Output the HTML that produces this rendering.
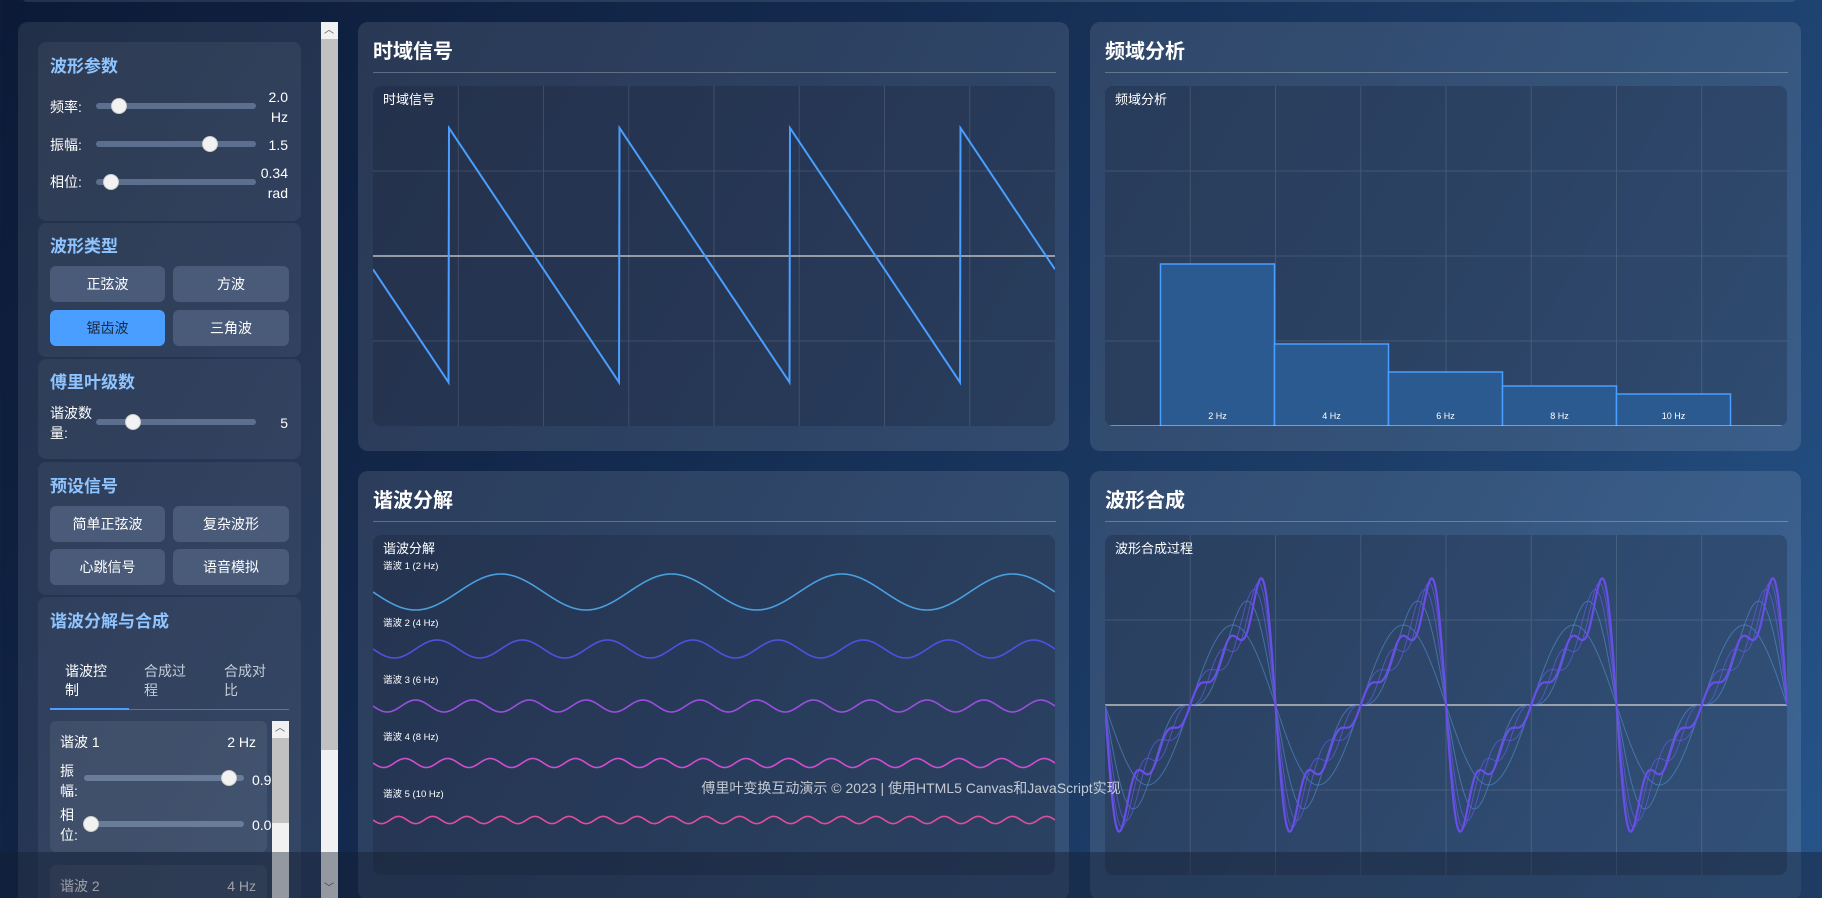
<!DOCTYPE html>
<html><head><meta charset="utf-8">
<style>
*{box-sizing:border-box;margin:0;padding:0}
html,body{width:1822px;height:898px;overflow:hidden}
body{position:relative;font-family:"Liberation Sans","Noto Sans CJK SC",sans-serif;color:#fff;
background:linear-gradient(120deg,#0c1a36 0%,#13294d 35%,#1c3d68 70%,#26548a 100%)}
.abs{position:absolute}
.topbar{left:22px;top:-8px;width:1774px;height:10px;border-radius:6px;background:rgba(255,255,255,0.1)}
.side{left:18px;top:22px;width:320px;height:900px;border-radius:10px;background:rgba(255,255,255,0.09);overflow:hidden}
.sb{left:321px;top:22px;width:17px;height:876px;background:#f1f1f1}
.sbt{left:321px;top:39px;width:17px;height:711px;background:#c1c1c1}
.sec{left:38px;width:263px;border-radius:8px;background:rgba(255,255,255,0.06)}
.st{left:50px;font-size:17px;font-weight:bold;color:#8ec4ff;line-height:20px}
.lb{font-size:14px;line-height:20px;color:#fff}
.trk{height:6px;border-radius:3px;background:#5c6f8e}
.th{width:16px;height:16px;border-radius:50%;background:#f2f2f2;border:1px solid #ccc}
.val{font-size:14px;line-height:20px;text-align:right;color:#fff}
.btn{height:36px;border-radius:6px;background:#4a5b79;font-size:14px;line-height:36px;text-align:center;color:#fff}
.btn.on{background:#4a9eff;color:#1a2a44}
.panel{border-radius:10px;background:rgba(255,255,255,0.11);width:711px;height:429px}
.pt{left:15px;top:16px;font-size:20px;font-weight:bold;line-height:28px}
.pd{left:15px;right:13px;top:50px;height:1px;background:rgba(255,255,255,0.25)}
.ch{left:15px;top:64px;width:682px;height:340px;border-radius:8px;background:rgba(20,30,50,0.28);overflow:hidden}
.cl{left:10px;top:5px;font-size:13px;line-height:18px}
svg{position:absolute;left:0;top:0}
</style></head><body>
<div class="abs topbar"></div>

<div class="abs side"></div>
<div class="abs sb"></div><div class="abs sbt"></div>
<div class="abs" style="left:324px;top:26px;font-size:10px;color:#555;line-height:10px">︿</div>
<div class="abs" style="left:324px;top:884px;font-size:10px;color:#555;line-height:10px">﹀</div>

<div class="abs sec" style="top:42px;height:179px"></div>
<div class="abs st" style="top:57px">波形参数</div>
<div class="abs lb" style="left:50px;top:97px">频率:</div>
<div class="abs trk" style="left:96px;top:103px;width:160px"></div>
<div class="abs th" style="left:111px;top:98px"></div>
<div class="abs val" style="left:250px;top:87px;width:38px">2.0<br>Hz</div>
<div class="abs lb" style="left:50px;top:135px">振幅:</div>
<div class="abs trk" style="left:96px;top:141px;width:160px"></div>
<div class="abs th" style="left:202px;top:136px"></div>
<div class="abs val" style="left:250px;top:135px;width:38px">1.5</div>
<div class="abs lb" style="left:50px;top:172px">相位:</div>
<div class="abs trk" style="left:96px;top:179px;width:160px"></div>
<div class="abs th" style="left:103px;top:174px"></div>
<div class="abs val" style="left:250px;top:163px;width:38px">0.34<br>rad</div>

<div class="abs sec" style="top:223px;height:134px"></div>
<div class="abs st" style="top:237px">波形类型</div>
<div class="abs btn" style="left:50px;top:266px;width:115px">正弦波</div>
<div class="abs btn" style="left:173px;top:266px;width:116px">方波</div>
<div class="abs btn on" style="left:50px;top:310px;width:115px">锯齿波</div>
<div class="abs btn" style="left:173px;top:310px;width:116px">三角波</div>

<div class="abs sec" style="top:359px;height:100px"></div>
<div class="abs st" style="top:373px">傅里叶级数</div>
<div class="abs lb" style="left:50px;top:403px">谐波数<br>量:</div>
<div class="abs trk" style="left:96px;top:419px;width:160px"></div>
<div class="abs th" style="left:125px;top:414px"></div>
<div class="abs val" style="left:250px;top:413px;width:38px">5</div>

<div class="abs sec" style="top:462px;height:133px"></div>
<div class="abs st" style="top:477px">预设信号</div>
<div class="abs btn" style="left:50px;top:506px;width:115px">简单正弦波</div>
<div class="abs btn" style="left:173px;top:506px;width:116px">复杂波形</div>
<div class="abs btn" style="left:50px;top:549px;width:115px">心跳信号</div>
<div class="abs btn" style="left:173px;top:549px;width:116px">语音模拟</div>

<div class="abs sec" style="top:597px;height:320px"></div>
<div class="abs st" style="top:612px">谐波分解与合成</div>
<div class="abs lb" style="left:65px;top:662px;line-height:19px">谐波控<br>制</div>
<div class="abs lb" style="left:144px;top:662px;line-height:19px;color:#c4ccd8">合成过<br>程</div>
<div class="abs lb" style="left:224px;top:662px;line-height:19px;color:#c4ccd8">合成对<br>比</div>
<div class="abs" style="left:50px;top:709px;width:239px;height:1px;background:rgba(255,255,255,0.25)"></div>
<div class="abs" style="left:50px;top:708px;width:79px;height:2px;background:#4a9eff"></div>
<div class="abs" style="left:50px;top:721px;width:217px;height:131px;border-radius:6px;background:rgba(255,255,255,0.07)"></div>
<div class="abs" style="left:272px;top:721px;width:17px;height:180px;background:#f1f1f1"></div>
<div class="abs" style="left:272px;top:738px;width:17px;height:85px;background:#c1c1c1"></div>
<div class="abs" style="left:275px;top:724px;font-size:10px;color:#555;line-height:10px">︿</div>
<div class="abs lb" style="left:60px;top:732px">谐波 1</div>
<div class="abs val" style="left:200px;top:732px;width:56px">2 Hz</div>
<div class="abs lb" style="left:60px;top:761px">振<br>幅:</div>
<div class="abs trk" style="left:84px;top:775px;width:160px;background:#6a7d98"></div>
<div class="abs th" style="left:221px;top:770px"></div>
<div class="abs" style="left:252px;top:770px;width:20px;overflow:hidden;font-size:14px;line-height:20px">0.95</div>
<div class="abs lb" style="left:60px;top:805px">相<br>位:</div>
<div class="abs trk" style="left:84px;top:821px;width:160px;background:#6a7d98"></div>
<div class="abs th" style="left:83px;top:816px"></div>
<div class="abs" style="left:252px;top:815px;width:20px;overflow:hidden;font-size:14px;line-height:20px">0.00</div>
<div class="abs" style="left:50px;top:865px;width:217px;height:60px;border-radius:6px;background:rgba(255,255,255,0.07)"></div>
<div class="abs lb" style="left:60px;top:876px">谐波 2</div>
<div class="abs val" style="left:200px;top:876px;width:56px">4 Hz</div>

<div class="abs panel" style="left:358px;top:22px">
 <div class="abs pt">时域信号</div><div class="abs pd"></div>
 <div class="abs ch"><svg width="682" height="340" id="s1"></svg><div class="abs cl">时域信号</div></div>
</div>
<div class="abs panel" style="left:1090px;top:22px">
 <div class="abs pt">频域分析</div><div class="abs pd"></div>
 <div class="abs ch"><svg width="682" height="340" id="s2"></svg><div class="abs cl">频域分析</div></div>
</div>
<div class="abs panel" style="left:358px;top:471px">
 <div class="abs pt">谐波分解</div><div class="abs pd"></div>
 <div class="abs ch"><svg width="682" height="340" id="s3"></svg><div class="abs cl">谐波分解</div></div>
</div>
<div class="abs panel" style="left:1090px;top:471px">
 <div class="abs pt">波形合成</div><div class="abs pd"></div>
 <div class="abs ch"><svg width="682" height="340" id="s4"></svg><div class="abs cl">波形合成过程</div></div>
</div>

<div class="abs" style="left:0;top:852px;width:1822px;height:46px;background:rgba(18,28,48,0.42)"></div>
<div class="abs" style="left:0;top:779px;width:1822px;text-align:center;font-size:14px;line-height:18px;color:rgba(255,255,255,0.72)">傅里叶变换互动演示 © 2023 | 使用HTML5 Canvas和JavaScript实现</div>

<script>
var NS="http://www.w3.org/2000/svg";
function el(svg,tag,a){var e=document.createElementNS(NS,tag);for(var k in a)e.setAttribute(k,a[k]);svg.appendChild(e);return e;}
function grid(svg,zero){var s="";for(var i=1;i<8;i++)s+="M"+(i*85.25)+" 0V340";for(var j=1;j<4;j++)if(j!=2||!zero)s+="M0 "+(j*85)+"H682";
 el(svg,"path",{d:s,stroke:"rgba(255,255,255,0.12)","stroke-width":1,fill:"none"});
 if(zero)el(svg,"path",{d:"M0 170H682",stroke:"rgba(200,200,200,0.7)","stroke-width":2,fill:"none"});}
var P=170.5;
var s1=document.getElementById("s1");grid(s1,true);
var d="";for(var x=0;x<=682;x+=0.5){var t=((x-76)%P+P)%P;var y=42+t/P*255;d+=(x?"L":"M")+x+" "+y.toFixed(1);}
el(s1,"path",{d:d,stroke:"#4a9eff","stroke-width":2,fill:"none"});
var s2=document.getElementById("s2");grid(s2,false);
var hs=[162,82,54,40,32],lb=["2 Hz","4 Hz","6 Hz","8 Hz","10 Hz"];
for(var i=0;i<5;i++){var bx=55.5+i*114;el(s2,"rect",{x:bx,y:340-hs[i],width:114,height:hs[i]+2,fill:"#2a5a90",stroke:"#4a9eff","stroke-width":1.5});
 var tx=el(s2,"text",{x:bx+57,y:333,fill:"#fff","font-size":9,"text-anchor":"middle","font-family":"Liberation Sans"});tx.textContent=lb[i];}
el(s2,"path",{d:"M0 339.5H682",stroke:"rgba(200,200,200,0.6)","stroke-width":1});
var s3=document.getElementById("s3");var cols=["#4a9ee0","#5050e0","#9b4ee0","#d04ed0","#e04e9b"];
for(var n=1;n<=5;n++){var c=57*n,A=18/n;var d="";for(var x=0;x<=682;x+=0.5){var y=c+A*Math.sin(2*Math.PI*x*n/P);d+=(x?"L":"M")+x+" "+y.toFixed(2);}
 el(s3,"path",{d:d,stroke:cols[n-1],"stroke-width":1.6,fill:"none"});
 var t=el(s3,"text",{x:10,y:57*n-23,fill:"#fff","font-size":9.5,"font-family":"Liberation Sans,Noto Sans CJK SC"});t.textContent="谐波 "+n+" ("+(2*n)+" Hz)";}
var s4=document.getElementById("s4");grid(s4,true);
for(var N=1;N<=5;N++){var d="";for(var x=0;x<=682;x+=0.5){var th=2*Math.PI*x/P,v=0;for(var k=1;k<=N;k++)v+=Math.sin(k*th)/k;var y=170+80*v;d+=(x?"L":"M")+x+" "+y.toFixed(2);}
 if(N<5)el(s4,"path",{d:d,stroke:N<3?"rgba(90,150,220,0.55)":"rgba(100,90,230,0.7)","stroke-width":1,fill:"none"});
 else el(s4,"path",{d:d,stroke:"#6a4ee8","stroke-width":2.2,fill:"none"});}
</script>
</body></html>
